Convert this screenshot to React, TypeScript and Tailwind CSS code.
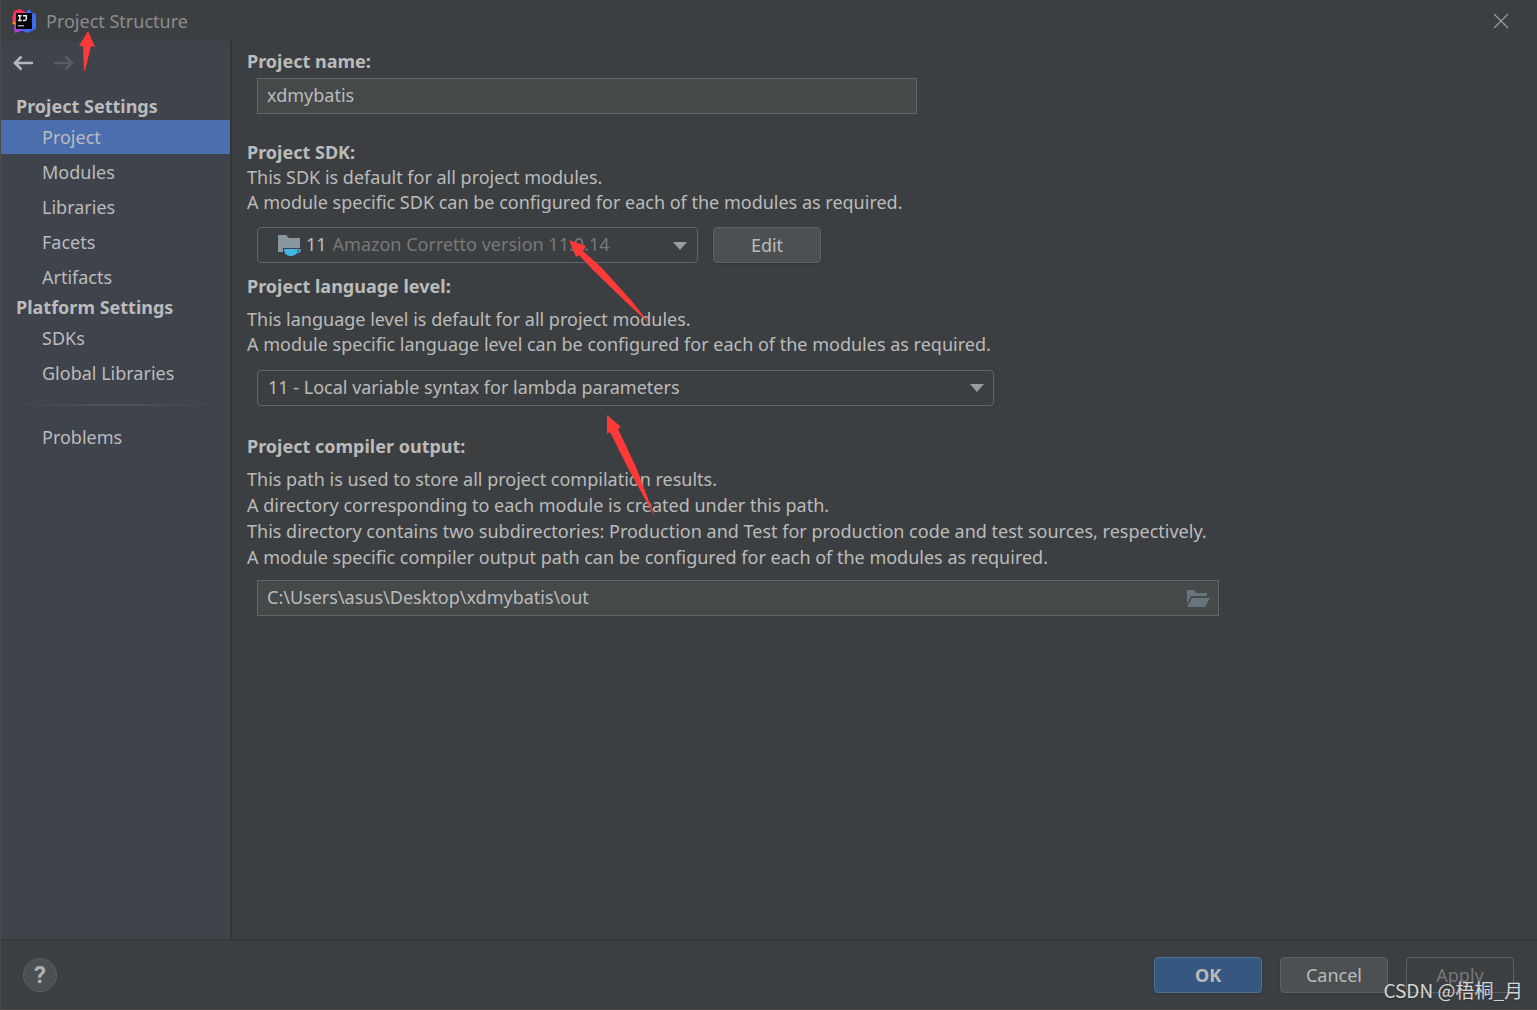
import { ReactNode } from 'react';

const projectItems = ['Project', 'Modules', 'Libraries', 'Facets', 'Artifacts'];
const platformItems = ['SDKs', 'Global Libraries'];

const Logo = () => (
  <svg width="24" height="24" viewBox="0 0 24 24" aria-hidden="true">
    <path d="M0 14L3 9l4 3-2 6z" fill="#f98b17" />
    <path d="M2 2l6-2 7 4-3 8-8 3-4-5z" fill="#fd2f5e" />
    <path d="M3 15l5-2 6 8-5 1-6 2-1-5z" fill="#a844d8" />
    <path d="M13 4l4-4 3 4 4 1v15l-9 4-6-3z" fill="#3a6bf0" />
    <rect x="4" y="4" width="16" height="16" fill="#07070b" />
    <path d="M6 6.700h3.600M7.800 6v6M6 11.500h3.600M11 6.700h3.300v3.400c0 1-.6 1.400-1.400 1.400H11" fill="none" stroke="#f2f2f2" strokeWidth="1.400" />
    <path d="M6 16.700h6" stroke="#a8a8a8" strokeWidth="1.400" />
  </svg>
);

const ArrowIcon = ({ className }: { className: string }) => (
  <svg className={className} width="20" height="16" viewBox="0 0 20 16" fill="none" stroke="currentColor" strokeWidth="2.600" aria-hidden="true">
    <path d="M20 8H2M8.500 1.500L2 8l6.500 6.500" />
  </svg>
);

const Caret = () => (
  <svg className="pointer-events-none absolute right-2.5 top-3.5" width="14" height="8" viewBox="0 0 14 8" aria-hidden="true">
    <path d="M0 0h14L7 8z" fill="#9a9da0" />
  </svg>
);

const JdkIcon = () => (
  <svg className="ml-5 mt-0.5 shrink-0" width="24" height="22" viewBox="0 0 24 22" aria-hidden="true">
    <path d="M0 0h8l3 3h11v10H5v4H0z" fill="#8b979e" />
    <path d="M6 14h15c2.500 0 3 3.500-2.500 4.500C17 20.500 15 21 12.500 21 9 21 6 18.500 6 14z" fill="#40b6e0" />
    <path d="M19.500 15.300h1.800c.2.800-.6 1.400-1.900 1.700z" fill="#3c3f41" />
  </svg>
);

const NavItem = ({ children, active }: { children: ReactNode; active?: boolean }) => (
  <li>
    <a
      href="#"
      className={
        active
          ? 'block bg-[#4b6eaf] pl-[41px] leading-[34px]'
          : 'block pl-[41px] leading-[34px]'
      }
    >
      {children}
    </a>
  </li>
);

const App = () => {
  return (
    <div className="relative flex min-h-screen flex-col border-b border-l border-[#4a4a4c] bg-[#3c3f41] font-['Noto_Sans','Noto_Sans_CJK_SC',sans-serif] text-[18px] text-[#bbbbbb]">
      <header className="flex h-[41px] items-center justify-between pl-[11px] pr-7">
        <div className="flex items-center gap-2.5">
          <Logo />
          <h1 className="pt-0.5 text-[#8c8c8c]">Project Structure</h1>
        </div>
        <button type="button" aria-label="Close">
          <svg width="16" height="16" viewBox="0 0 16 16" stroke="#999999" strokeWidth="1.300">
            <path d="M1 1l14 14M15 1L1 15" />
          </svg>
        </button>
      </header>

      <div className="flex flex-1">
        <nav className="w-[231px] shrink-0 border-r-2 border-[#333434] bg-[#3f434c]">
          <div className="flex gap-[21px] pl-3 pt-3.5">
            <button type="button" aria-label="Back">
              <ArrowIcon className="text-[#b4b6b8]" />
            </button>
            <button type="button" aria-label="Forward" disabled>
              <ArrowIcon className="rotate-180 text-[#5a5c5f]" />
            </button>
          </div>
          <h2 className="mt-[22px] pl-[15px] font-bold leading-[27px]">Project Settings</h2>
          <ul className="flex flex-col gap-px">
            {projectItems.map((item) => (
              <NavItem key={item} active={item === 'Project'}>
                {item}
              </NavItem>
            ))}
          </ul>
          <h2 className="pl-[15px] font-bold leading-[27px]">Platform Settings</h2>
          <ul className="flex flex-col gap-px">
            {platformItems.map((item) => (
              <NavItem key={item}>{item}</NavItem>
            ))}
          </ul>
          <div className="mx-3.5 my-3.5 h-0.5 bg-linear-to-r from-transparent via-[#535353] to-transparent" />
          <ul>
            <NavItem>Problems</NavItem>
          </ul>
        </nav>

        <main className="flex-1 pl-[15px] pt-[7px] leading-[26px]">
          <label htmlFor="name" className="block font-bold">
            Project name:
          </label>
          <input
            id="name"
            defaultValue="xdmybatis"
            className="ml-2.5 mt-1 block h-9 w-[660px] border border-[#646464] bg-[#45494a] px-[9px] pb-0.5 outline-none"
          />

          <label htmlFor="sdk" className="mt-[25px] block font-bold">
            Project SDK:
          </label>
          <div className="leading-[25px]">
            <p>This SDK is default for all project modules.</p>
            <p>A module specific SDK can be configured for each of the modules as required.</p>
          </div>
          <div className="ml-2.5 mt-3 flex gap-[15px]">
            <div className="relative flex h-9 w-[441px] items-center rounded-sm border border-[#646464]">
              <JdkIcon />
              <span className="ml-1 pb-0.5">11</span>
              <select id="sdk" className="ml-1.5 h-full flex-1 appearance-none bg-transparent pb-0.5 text-[#787878] outline-none">
                <option>Amazon Corretto version 11.0.14</option>
              </select>
              <Caret />
            </div>
            <button type="button" className="h-9 w-[108px] rounded border border-[#5e6060] bg-[#4c5052] shadow-sm">
              Edit
            </button>
          </div>

          <label htmlFor="level" className="mt-2.5 block font-bold">
            Project language level:
          </label>
          <div className="mt-2 leading-[25px]">
            <p>This language level is default for all project modules.</p>
            <p>A module specific language level can be configured for each of the modules as required.</p>
          </div>
          <div className="relative ml-2.5 mt-[13px] h-9 w-[737px]">
            <select id="level" className="h-full w-full appearance-none rounded-sm border border-[#646464] bg-transparent px-2.5 pb-0.5 outline-none">
              <option>11 - Local variable syntax for lambda parameters</option>
            </select>
            <Caret />
          </div>

          <label htmlFor="output" className="mt-[27px] block font-bold">
            Project compiler output:
          </label>
          <div className="mt-[7px]">
            <p>This path is used to store all project compilation results.</p>
            <p>A directory corresponding to each module is created under this path.</p>
            <p>This directory contains two subdirectories: Production and Test for production code and test sources, respectively.</p>
            <p>A module specific compiler output path can be configured for each of the modules as required.</p>
          </div>
          <div className="ml-2.5 mt-2.5 flex h-9 w-[962px] items-center border border-[#646464] bg-[#45494a] pr-2">
            <input id="output" defaultValue="C:\Users\asus\Desktop\xdmybatis\out" className="h-full flex-1 bg-transparent px-[9px] pb-0.5 outline-none" />
            <button type="button" aria-label="Browse" className="pt-0.5">
              <svg width="24" height="18" viewBox="0 0 24 18" fill="#68757a">
                <path d="M1 0h7l2 3h11v3H5L1 14z" />
                <path d="M6 8h18l-5 9H1z" />
              </svg>
            </button>
          </div>
        </main>
      </div>

      <footer className="flex h-[70px] items-center justify-between border-t border-[#323434] pl-[22px] pr-[23px]">
        <button type="button" aria-label="Help" className="flex h-[34px] w-[34px] items-center justify-center rounded-full border border-[#5e6060] bg-[#4c5052] font-[Roboto,sans-serif] text-[24px] font-bold text-[#afb1b3]">
          ?
        </button>
        <div className="flex gap-[18px]">
          <button type="button" className="h-9 w-[108px] rounded border border-[#4c708c] bg-[#365880] pt-0.5 font-bold shadow-sm">
            OK
          </button>
          <button type="button" className="h-9 w-[108px] rounded border border-[#5e6060] bg-[#4c5052] pt-0.5 shadow-sm">
            Cancel
          </button>
          <button type="button" disabled className="h-9 w-[108px] rounded border border-[#5e6060] pt-0.5 text-[#777777]">
            Apply
          </button>
        </div>
      </footer>

      <svg className="pointer-events-none absolute -left-px top-0" width="700" height="530" fill="#fe3a38" aria-hidden="true">
        <path d="M88 31L95 47 91 46 85 71H84L83 46H79z" />
        <path d="M569 240L586 246 583 251 601 267 630 299 651 325 626 302 594 271 579 255 576 257z" />
        <path d="M607 415L621 427 618 429 636 467 655 517 628 468 610 432 607 434z" />
      </svg>
      <div className="pointer-events-none absolute bottom-1.5 right-3.5 font-['Noto_Sans_CJK_SC',sans-serif] text-[19px] leading-[26px] text-[#d6d6d6] text-shadow-sm">
        CSDN @梧桐_月
      </div>
    </div>
  );
};

export default App;
